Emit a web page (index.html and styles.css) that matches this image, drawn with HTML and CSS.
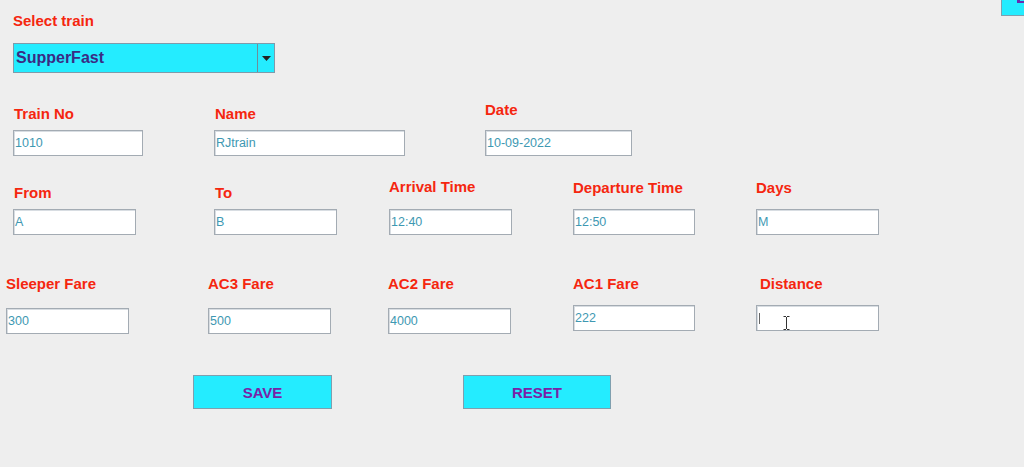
FILE: index.html
```html
<!DOCTYPE html>
<html>
<head>
<meta charset="utf-8">
<link rel="stylesheet" href="styles.css">
</head>
<body>
<div class="topbar"><div class="btn back"><span class="glyph-frag"></span></div></div>

<div class="select-sec">
  <div class="lbl">Select train</div>
  <div class="combo">
    <span class="combo-text">SupperFast</span>
    <span class="combo-arrow"><svg width="9" height="5" viewBox="0 0 9 5"><path d="M0 0h9L4.5 5z" fill="#222"/></svg></span>
  </div>
</div>

<div class="row row1">
  <div class="field"><div class="lbl g8">Train No</div><div class="tf w130">1010</div></div>
  <div class="field"><div class="lbl g8">Name</div><div class="tf w191">RJtrain</div></div>
  <div class="field"><div class="lbl g12 nl">Date</div><div class="tf w147">10-09-2022</div></div>
</div>

<div class="row row2">
  <div class="field"><div class="lbl g8">From</div><div class="tf">A</div></div>
  <div class="field"><div class="lbl g8">To</div><div class="tf">B</div></div>
  <div class="field"><div class="lbl g14 nl">Arrival Time</div><div class="tf">12:40</div></div>
  <div class="field"><div class="lbl g13 nl">Departure Time</div><div class="tf w122">12:50</div></div>
  <div class="field"><div class="lbl g13 nl">Days</div><div class="tf">M</div></div>
</div>

<div class="row row3">
  <div class="field"><div class="lbl g16 nl">Sleeper Fare</div><div class="tf">300</div></div>
  <div class="field"><div class="lbl g16 nl">AC3 Fare</div><div class="tf">500</div></div>
  <div class="field"><div class="lbl g16 nl">AC2 Fare</div><div class="tf">4000</div></div>
  <div class="field hi"><div class="lbl g13 nl">AC1 Fare</div><div class="tf w122">222</div></div>
  <div class="field hi"><div class="lbl g13 ind">Distance</div><div class="tf focus"><span class="caret"></span><svg class="ibeam" width="7" height="14" viewBox="0 0 7 14"><path d="M0.5 0.5h2.5M4 0.5h2.5M3.5 1v12M0.5 13.5h2.5M4 13.5h2.5" stroke="#333" stroke-width="1" fill="none"/></svg></div></div>
</div>

<div class="actions">
  <div class="btn save">SAVE</div>
  <div class="btn reset">RESET</div>
</div>
</body>
</html>
```

FILE: styles.css
```css
html, body {
  margin: 0;
  padding: 0;
  background: #eeeeee;
  overflow: hidden;
  width: 1024px;
  height: 467px;
}
body {
  font-family: "Liberation Sans", Arial, sans-serif;
}
.topbar {
  display: flex;
  justify-content: flex-end;
  height: 0;
}
.btn {
  background: #24ecff;
  border: 1px solid #7f9fae;
  color: #7a22a6;
  font-weight: bold;
  font-size: 15px;
  display: flex;
  align-items: center;
  justify-content: center;
  box-sizing: border-box;
}
.back {
  width: 40px;
  height: 36px;
  margin-top: -20px;
  margin-right: -17px;
  justify-content: flex-start;
  align-items: flex-start;
  padding-left: 15px;
  padding-top: 15px;
}
.glyph-frag {
  display: block;
  width: 9px;
  height: 5px;
  border-left: 3px solid #6a2ab0;
  border-bottom: 2px solid #6a2ab0;
}
.lbl {
  color: #f5260f;
  font-weight: bold;
  font-size: 15px;
  line-height: 17px;
  white-space: nowrap;
}
.select-sec {
  padding: 12px 0 0 13px;
  display: flex;
  flex-direction: column;
  align-items: flex-start;
}
.combo {
  margin-top: 14px;
  width: 262px;
  height: 30px;
  box-sizing: border-box;
  border: 1px solid #7f9aaa;
  background: #24ecff;
  display: flex;
  align-items: stretch;
}
.combo-text {
  flex: 1;
  display: flex;
  align-items: center;
  padding-left: 2px;
  font-weight: bold;
  font-size: 16px;
  color: #3a2b84;
}
.combo-arrow {
  width: 16px;
  border-left: 1px solid #6f8c9a;
  display: flex;
  align-items: center;
  justify-content: center;
}
.row {
  display: grid;
  align-items: end;
}
.row1 {
  margin-top: 28px;
  padding-left: 13px;
  grid-template-columns: 201px 271px auto;
}
.row2 {
  margin-top: 22px;
  padding-left: 13px;
  grid-template-columns: 201px 175px 184px 183px auto;
}
.row3 {
  margin-top: 40px;
  padding-left: 6px;
  grid-template-columns: 202px 180px 185px 183px auto;
}
.field {
  display: flex;
  flex-direction: column;
  align-items: flex-start;
}
.field .lbl { margin-left: 1px; }
.field .lbl.nl { margin-left: 0; }
.field .lbl.ind { margin-left: 4px; }
.g8 { margin-bottom: 8px; }
.g12 { margin-bottom: 12px; }
.g13 { margin-bottom: 13px; }
.g14 { margin-bottom: 14px; }
.g16 { margin-bottom: 16px; }
.field.hi .tf { margin-bottom: 3px; }
.tf {
  position: relative;
  width: 123px;
  height: 26px;
  box-sizing: border-box;
  background: #ffffff;
  border: 1px solid #a3abb3;
  box-shadow: inset 1px 1px 0 #d8dde2;
  color: #3e98b2;
  font-size: 12.5px;
  line-height: 24px;
  padding-left: 1px;
  display: flex;
  align-items: center;
}
.w122 { width: 122px; }
.w130 { width: 130px; }
.w147 { width: 147px; }
.w191 { width: 191px; }
.caret {
  width: 1px;
  height: 11px;
  background: #666;
  margin-left: 1px;
}
.ibeam {
  position: absolute;
  left: 26px;
  top: 10px;
}
.actions {
  display: flex;
  padding-left: 193px;
  margin-top: 41px;
  gap: 131px;
}
.save {
  width: 139px;
  height: 34px;
}
.reset {
  width: 148px;
  height: 34px;
}
```
